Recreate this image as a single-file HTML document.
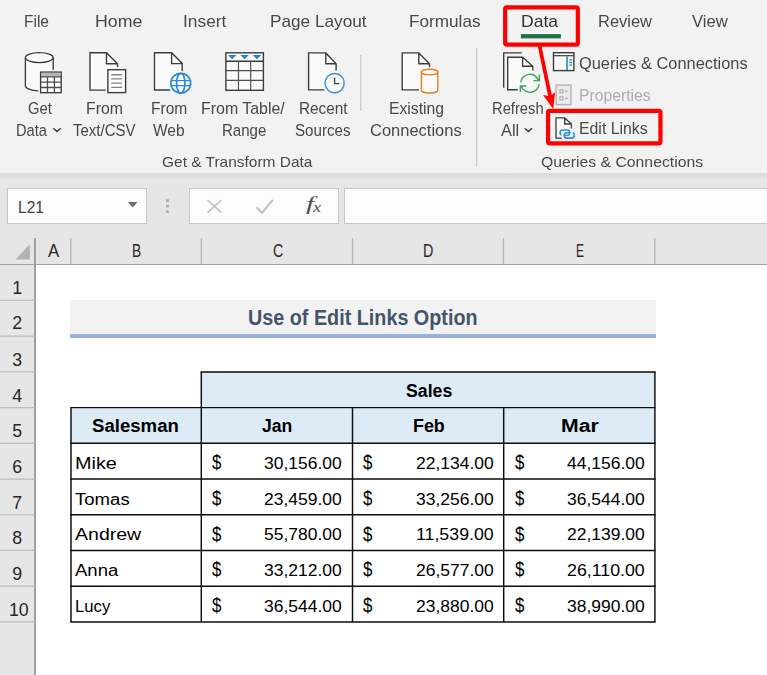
<!DOCTYPE html>
<html lang="en"><head><meta charset="utf-8"><title>Use of Edit Links Option</title>
<style>
html,body{margin:0;padding:0;}
body{width:767px;height:675px;position:relative;overflow:hidden;background:#fff;font-family:"Liberation Sans",sans-serif;}
.t{position:absolute;white-space:pre;line-height:normal;transform-origin:0 0;display:block;}
.a{position:absolute;}
.g{position:absolute;left:0;top:0;width:767px;height:175px;will-change:transform;}
</style></head><body>
<!-- ribbon background -->
<div class="a" style="left:0;top:0;width:767px;height:173px;background:#f2f2f2;"></div>
<div class="a" style="left:0;top:173px;width:767px;height:9px;background:linear-gradient(#d8d8d8 0,#dedede 35%,#e3e3e3 45%,#e6e6e6 100%);"></div>
<div class="a" style="left:0;top:182px;width:767px;height:82.5px;background:#e6e6e6;"></div>
<!-- formula bar boxes -->
<div class="a" style="left:7px;top:188.3px;width:139.6px;height:35.6px;box-sizing:border-box;border:1.4px solid #c6c6c6;background:#fcfcfc;"></div>
<div class="a" style="left:188.6px;top:188.3px;width:150px;height:35.6px;box-sizing:border-box;border:1.4px solid #c6c6c6;background:#fcfcfc;"></div>
<div class="a" style="left:343.6px;top:188.3px;width:440px;height:35.6px;box-sizing:border-box;border:1.4px solid #c6c6c6;background:#fcfcfc;"></div>
<!-- column header bottom line & row header column -->
<div class="a" style="left:0;top:264.05px;width:767px;height:1.3px;background:#a3a3a3;"></div>
<div class="a" style="left:0;top:265.3px;width:35px;height:410px;background:#e6e6e6;"></div>
<div class="a" style="left:34.25px;top:237.5px;width:1.5px;height:438px;background:#a0a0a0;"></div>
<!-- sheet -->
<div class="a" style="left:36px;top:265.3px;width:731px;height:410px;background:#fff;"></div>
<!-- title cell -->
<div class="a" style="left:70px;top:299.6px;width:585.9px;height:34.4px;background:#f2f2f2;"></div>
<div class="a" style="left:70px;top:333.85px;width:585.9px;height:4.2px;background:#9ab0de;"></div>

<svg class="a" style="left:0;top:0" width="767" height="675" viewBox="0 0 767 675" fill="none" stroke-linecap="butt">
<!-- selected tab underline -->
<rect x="520.9" y="34.1" width="40" height="4.3" fill="#217346"/>
<!-- group separators -->
<path d="M360.7 55V111M476.6 48V167" stroke="#c8c8c8" stroke-width="1.2"/>
<!-- Get Data -->
<g stroke="#3b3b3b" stroke-width="1.35">
<path d="M25.4 57.6V85.7A13.9 5.2 0 0 0 53.2 85.7V57.6Z" fill="#fafafa" stroke="none"/>
<ellipse cx="39.3" cy="57.6" rx="13.9" ry="5" fill="#fafafa"/>
<path d="M53.2 57.6V69.8M25.4 57.6V85.7A13.9 5.2 0 0 0 38.3 90.89"/>
<rect x="39.5" y="71" width="22.8" height="22.8" fill="#f6f6f6" stroke="none"/>
<rect x="40.6" y="72.1" width="20.6" height="20.6" fill="#fff"/>
<rect x="41.3" y="72.8" width="19.2" height="3.5" fill="#b5b5b5" stroke="none"/>
<path d="M40.6 76.9H61.2M40.6 82.1H61.2M40.6 87.5H61.2M47.5 76.9V92.7M54.4 76.9V92.7" stroke-width="1.3" stroke="#4a4a4a"/>
</g>
<!-- From Text/CSV -->
<g stroke="#3b3b3b" stroke-width="1.4">
<path d="M90 52.8H106.5L117.5 63.8V90.1H90Z" fill="#fafafa" stroke="none"/>
<path d="M105.8 90.1H90V52.8H106.5L117.5 63.8V67M106.5 52.8V63.8H117.5"/>
<rect x="106.8" y="68.6" width="19.9" height="25.1" fill="#f6f6f6" stroke="none"/>
<rect x="107.9" y="69.7" width="17.7" height="22.9" fill="#fff"/>
<path d="M111.2 74.7H122.1M111.2 78.9H122.1M111.2 83.1H122.1M111.2 87.3H122.1" stroke="#878380" stroke-width="1.35"/>
</g>
<!-- From Web -->
<g stroke="#3b3b3b" stroke-width="1.35">
<path d="M154.5 52.7H171.6L182.2 63V90H154.5Z" fill="#fafafa" stroke="none"/>
<path d="M170.2 90H154.5V52.7H171.6L182.2 63.4V71.2M171.6 52.7V63.6H182.2"/>
<g stroke="#2a8ad8" stroke-width="1.7">
<circle cx="180.75" cy="83.2" r="9.9" fill="#fff"/>
<ellipse cx="180.75" cy="83.2" rx="4.2" ry="9.9"/>
<path d="M171.3 80.6H190.2M171.3 85.6H190.2" stroke-width="1.4"/>
</g>
</g>
<!-- From Table/Range -->
<g stroke="#3b3b3b" stroke-width="1.4">
<rect x="225.9" y="52.8" width="37.5" height="37.5" fill="#fafafa"/>
<path d="M225.9 61.2H263.4" stroke-width="1.5"/>
<path d="M238.5 61.2V90.3M250.7 61.2V90.3M225.9 70.6H263.4M225.9 80.4H263.4" stroke-width="1.15" stroke="#4d4d4d"/>
<path d="M228 55H236.4L232.2 59.3ZM240.4 55H248.9L244.65 59.3ZM252.7 55H261.3L257 59.3Z" fill="#1f84d4" stroke="none"/>
</g>
<!-- Recent Sources -->
<g stroke="#3b3b3b" stroke-width="1.4">
<path d="M308.6 52.9H325.8L336.1 63.7V89.9H308.6Z" fill="#fafafa" stroke="none"/>
<path d="M324.3 89.9H308.6V52.9H325.8L336.1 63.7V70.4M325.8 52.9V63.7H336.1"/>
<circle cx="334.6" cy="83.1" r="9.6" fill="#fcfcfc" stroke="#3391dc" stroke-width="1.4"/>
<path d="M334.6 77.5V83.7H339.3" stroke-width="1.3"/>
</g>
<!-- Existing Connections -->
<g stroke="#3b3b3b" stroke-width="1.4">
<path d="M402.2 52.9H418.8L429.5 63.8V89.9H402.2Z" fill="#fafafa" stroke="none"/>
<path d="M419 89.9H402.2V52.9H418.8L429.5 63.8V67M418.8 52.9V63.8H429.5"/>
<g stroke="#e1801f" stroke-width="1.4">
<path d="M421.4 72.1V90.2A8.2 2.8 0 0 0 437.8 90.2V72.1Z" fill="#fafafa"/>
<ellipse cx="429.6" cy="72.1" rx="8.2" ry="2.8" fill="#fbfbfb"/>
</g>
</g>
<!-- Refresh All -->
<g stroke="#3b3b3b" stroke-width="1.35">
<path d="M521.8 52.9H503.7V87.8"/>
<path d="M507.7 57.2H522.6L532.8 66.2V89.7H507.7Z" fill="#fafafa" stroke="none"/>
<path d="M517.8 89.7H507.7V57.2H522.6L532.8 66.2V70.6M522.6 57.2V66.2H532.8"/>
<g stroke="#37a65b" stroke-width="1.4">
<path d="M520.6 82.6A9.3 9.3 0 0 1 538.6 80.4M539.4 74.6V80.6H533.4"/>
<path d="M539.2 84A9.3 9.3 0 0 1 521.2 86.2M520.4 92V86H526.4"/>
</g>
</g>
<!-- Queries & Connections small icon -->
<g stroke="#3b3b3b" stroke-width="1.4">
<rect x="553.5" y="52.7" width="20.4" height="17.9" fill="#fafafa"/>
<path d="M553.5 55.7H573.9" stroke-width="1.2"/>
<path d="M567 56.3V70" stroke="#2b8fd9" stroke-width="1.7"/>
<path d="M569.1 59.8H572.1M569.1 62.5H572.1M569.1 65.2H572.1" stroke="#2b8fd9" stroke-width="1.3"/>
</g>
<!-- Properties small icon (disabled) -->
<g stroke="#b4b4b4" stroke-width="1.5">
<rect x="556.15" y="85.05" width="14.8" height="19.6" fill="#ebebeb"/>
<rect x="559.9" y="89.8" width="3.1" height="3.1" stroke-width="1.1" stroke="#a8a8a8" fill="#f4f4f4"/>
<rect x="559.9" y="96.8" width="3.1" height="3.1" stroke-width="1.1" stroke="#a8a8a8" fill="#f4f4f4"/>
<path d="M565 91.4H567.7M565 98.4H567.7" stroke-width="1.1" stroke="#a8a8a8"/>
</g>
<!-- Edit Links small icon -->
<g stroke="#3b3b3b" stroke-width="1.3">
<path d="M556 117.9H564.7L571.4 124V138.2H556Z" fill="#fafafa" stroke="none"/>
<path d="M561.8 138.2H556V117.9H564.7L571.4 124V128.6M564.7 117.9V124H571.4"/>
<g stroke="#2b8fd9" stroke-width="1.55">
<rect x="560.1" y="129.9" width="9.6" height="5.5" rx="2.7"/>
<rect x="564.2" y="132.8" width="10.1" height="5.3" rx="2.6"/>
<path d="M561.3 135.4H563.4" stroke="#fafafa" stroke-width="2.3"/>
<path d="M570.5 132.8H572.6" stroke="#f5f5f5" stroke-width="2.3"/>
</g>
</g>
<!-- dropdown chevrons -->
<path d="M53.2 128.2L57 131.4L60.8 128.2M524.7 128.2L528.4 131.4L532.1 128.2" stroke="#444" stroke-width="1.5"/>
<!-- red annotations -->
<g stroke="#ff0000">
<rect x="505.15" y="7.35" width="72.7" height="37.3" rx="1.6" stroke-width="4.2"/>
<rect x="548.05" y="110.8" width="112.4" height="32.6" rx="1.6" stroke-width="4.2"/>
<path d="M539.6 46L550.4 97.5" stroke-width="3.7"/>
<path d="M543.1 95L549.9 96.3L555.1 92.3L553.2 109Z" fill="#ff0000" stroke="none"/>
</g>
<!-- formula bar glyphs -->
<path d="M127.8 202H137.6L132.7 207.6Z" fill="#707070"/>
<path d="M166.1 199.3h2.8v2.6h-2.8zM166.1 204.8h2.8v2.6h-2.8zM166.1 210.4h2.8v2.6h-2.8z" fill="#adadad"/>
<path d="M207.6 200L221.4 212.6M221.4 200L207.6 212.6" stroke="#c2c2c2" stroke-width="1.6"/>
<path d="M256.4 207.2L262 212.8L272.9 199.9" stroke="#c2c2c2" stroke-width="2.1"/>
<!-- select all triangle -->
<path d="M15.3 259.6H29.9V244.2Z" fill="#b3b3b3"/>
<!-- column header separators -->
<path d="M70.8 238V264M201.4 238V264M352.5 238V264M503.5 238V264M654.9 238V264" stroke="#b4b4b4" stroke-width="1.3"/>
<!-- row header separators -->
<path d="M0 300.47H35M0 336.19H35M0 371.90H35M0 407.62H35M0 443.33H35M0 479.04H35M0 514.76H35M0 550.47H35M0 586.19H35M0 621.90H35" stroke="#bcbcbc" stroke-width="1.2"/>
<!-- table -->
<rect x="201.3" y="371.90" width="453.6" height="35.71" fill="#ddebf7"/>
<rect x="71" y="407.62" width="583.9" height="35.71" fill="#ddebf7"/>
<g stroke="#0d0d0d" stroke-width="1.45">
<path d="M200.58 371.90H655.62M70.28 407.62H655.62M70.28 443.33H655.62M70.28 479.04H655.62M70.28 514.76H655.62M70.28 550.47H655.62M70.28 586.19H655.62M70.28 621.90H655.62"/>
<path d="M71 407.62V621.90M201.3 371.90V621.90M352.5 407.62V621.90M503.7 407.62V621.90M654.9 371.90V621.90"/>
</g>
</svg>

<div class="g">
<span class="t" style="left:23.80px;top:12px;font-size:16.2px;color:#484848;transform:scaleX(0.9569);">File</span>
<span class="t" style="left:95.10px;top:12px;font-size:16.2px;color:#484848;transform:scaleX(1.0974);">Home</span>
<span class="t" style="left:183.10px;top:12px;font-size:16.2px;color:#484848;transform:scaleX(1.0732);">Insert</span>
<span class="t" style="left:270.00px;top:12px;font-size:16.2px;color:#484848;transform:scaleX(1.0630);">Page Layout</span>
<span class="t" style="left:408.50px;top:12px;font-size:16.2px;color:#484848;transform:scaleX(1.0598);">Formulas</span>
<span class="t" style="left:521.00px;top:12px;font-size:16.2px;color:#333;transform:scaleX(1.0851);">Data</span>
<span class="t" style="left:598.40px;top:12px;font-size:16.2px;color:#484848;transform:scaleX(1.0173);">Review</span>
<span class="t" style="left:691.80px;top:12px;font-size:16.2px;color:#484848;transform:scaleX(1.0278);">View</span>
<span class="t" style="left:28.30px;top:99px;font-size:16.3px;color:#484848;transform:scaleX(0.9105);">Get</span>
<span class="t" style="left:16.30px;top:121px;font-size:16.3px;color:#484848;transform:scaleX(0.9018);">Data</span>
<span class="t" style="left:85.75px;top:99px;font-size:16.3px;color:#484848;transform:scaleX(0.9703);">From</span>
<span class="t" style="left:72.50px;top:121px;font-size:16.3px;color:#484848;transform:scaleX(0.9225);">Text/CSV</span>
<span class="t" style="left:150.75px;top:99px;font-size:16.3px;color:#484848;transform:scaleX(0.9571);">From</span>
<span class="t" style="left:153.00px;top:121px;font-size:16.3px;color:#484848;transform:scaleX(0.9509);">Web</span>
<span class="t" style="left:201.25px;top:99px;font-size:16.3px;color:#484848;transform:scaleX(0.9781);">From Table/</span>
<span class="t" style="left:222.00px;top:121px;font-size:16.3px;color:#484848;transform:scaleX(0.9243);">Range</span>
<span class="t" style="left:299.00px;top:99px;font-size:16.3px;color:#484848;transform:scaleX(0.9417);">Recent</span>
<span class="t" style="left:294.50px;top:121px;font-size:16.3px;color:#484848;transform:scaleX(0.9308);">Sources</span>
<span class="t" style="left:388.50px;top:99px;font-size:16.3px;color:#484848;transform:scaleX(0.9670);">Existing</span>
<span class="t" style="left:370.00px;top:121px;font-size:16.3px;color:#484848;transform:scaleX(1.0124);">Connections</span>
<span class="t" style="left:491.70px;top:99px;font-size:16.3px;color:#484848;transform:scaleX(0.9055);">Refresh</span>
<span class="t" style="left:500.50px;top:121px;font-size:16.3px;color:#484848;transform:scaleX(1.0056);">All</span>
<span class="t" style="left:161.60px;top:154px;font-size:14.6px;color:#484848;transform:scaleX(1.0599);">Get &amp; Transform Data</span>
<span class="t" style="left:540.80px;top:154px;font-size:14.6px;color:#484848;transform:scaleX(1.0800);">Queries &amp; Connections</span>
<span class="t" style="left:579.00px;top:54px;font-size:16.8px;color:#484848;transform:scaleX(0.9771);">Queries &amp; Connections</span>
<span class="t" style="left:579.20px;top:86px;font-size:16.8px;color:#acacac;transform:scaleX(0.9362);">Properties</span>
<span class="t" style="left:579.00px;top:119px;font-size:16.8px;color:#484848;transform:scaleX(0.9432);">Edit Links</span>
</div>
<span class="t" style="left:17.60px;top:198px;font-size:16.8px;color:#404040;transform:scaleX(0.9250);">L21</span>
<span class="t" style="left:305.60px;top:194px;font-size:18px;color:#4d4d4d;font-family:'Liberation Serif',serif;font-style:italic;transform:scaleX(1.6421);">f</span>
<span class="t" style="left:313.30px;top:199px;font-size:15px;color:#4d4d4d;font-family:'Liberation Serif',serif;font-style:italic;transform:scaleX(1.2073);">x</span>
<span class="t" style="left:48.00px;top:241px;font-size:17.8px;color:#262626;transform:scaleX(0.9432);">A</span>
<span class="t" style="left:132.30px;top:241px;font-size:17.8px;color:#262626;transform:scaleX(0.7747);">B</span>
<span class="t" style="left:272.70px;top:241px;font-size:17.8px;color:#262626;transform:scaleX(0.8000);">C</span>
<span class="t" style="left:423.00px;top:241px;font-size:17.8px;color:#262626;transform:scaleX(0.8078);">D</span>
<span class="t" style="left:575.60px;top:241px;font-size:17.8px;color:#262626;transform:scaleX(0.6737);">E</span>
<span class="t" style="left:12.16px;top:278px;font-size:17.8px;color:#262626;">1</span>
<span class="t" style="left:12.16px;top:313px;font-size:17.8px;color:#262626;">2</span>
<span class="t" style="left:12.16px;top:350px;font-size:17.8px;color:#262626;">3</span>
<span class="t" style="left:12.16px;top:386px;font-size:17.8px;color:#262626;">4</span>
<span class="t" style="left:12.16px;top:421px;font-size:17.8px;color:#262626;">5</span>
<span class="t" style="left:12.16px;top:457px;font-size:17.8px;color:#262626;">6</span>
<span class="t" style="left:12.16px;top:493px;font-size:17.8px;color:#262626;">7</span>
<span class="t" style="left:12.16px;top:528px;font-size:17.8px;color:#262626;">8</span>
<span class="t" style="left:12.16px;top:564px;font-size:17.8px;color:#262626;">9</span>
<span class="t" style="left:8.93px;top:600px;font-size:17.8px;color:#262626;">10</span>
<span class="t" style="left:248.10px;top:305px;font-size:21.6px;color:#44546a;font-weight:bold;transform:scaleX(0.9155);">Use of Edit Links Option</span>
<span class="t" style="left:405.60px;top:380px;font-size:18.3px;color:#000;font-weight:bold;transform:scaleX(0.9675);">Sales</span>
<span class="t" style="left:92.00px;top:415px;font-size:18.3px;color:#000;font-weight:bold;transform:scaleX(1.0176);">Salesman</span>
<span class="t" style="left:262.00px;top:415px;font-size:18.3px;color:#000;font-weight:bold;transform:scaleX(0.9619);">Jan</span>
<span class="t" style="left:413.30px;top:415px;font-size:18.3px;color:#000;font-weight:bold;transform:scaleX(0.9754);">Feb</span>
<span class="t" style="left:561.30px;top:415px;font-size:18.3px;color:#000;font-weight:bold;transform:scaleX(1.1600);">Mar</span>
<span class="t" style="left:74.50px;top:453px;font-size:17.3px;color:#000;transform:scaleX(1.1464);">Mike</span>
<span class="t" style="left:212.20px;top:452px;font-size:19.3px;color:#000;transform:scaleX(0.8744);">$</span>
<span class="t" style="left:264.30px;top:453px;font-size:17.3px;color:#000;transform:scaleX(1.0111);">30,156.00</span>
<span class="t" style="left:363.40px;top:452px;font-size:19.3px;color:#000;transform:scaleX(0.8744);">$</span>
<span class="t" style="left:415.50px;top:453px;font-size:17.3px;color:#000;transform:scaleX(1.0111);">22,134.00</span>
<span class="t" style="left:514.60px;top:452px;font-size:19.3px;color:#000;transform:scaleX(0.8744);">$</span>
<span class="t" style="left:566.70px;top:453px;font-size:17.3px;color:#000;transform:scaleX(1.0111);">44,156.00</span>
<span class="t" style="left:74.50px;top:489px;font-size:17.3px;color:#000;transform:scaleX(1.0739);">Tomas</span>
<span class="t" style="left:212.20px;top:488px;font-size:19.3px;color:#000;transform:scaleX(0.8744);">$</span>
<span class="t" style="left:264.30px;top:489px;font-size:17.3px;color:#000;transform:scaleX(1.0111);">23,459.00</span>
<span class="t" style="left:363.40px;top:488px;font-size:19.3px;color:#000;transform:scaleX(0.8744);">$</span>
<span class="t" style="left:415.50px;top:489px;font-size:17.3px;color:#000;transform:scaleX(1.0111);">33,256.00</span>
<span class="t" style="left:514.60px;top:488px;font-size:19.3px;color:#000;transform:scaleX(0.8744);">$</span>
<span class="t" style="left:566.70px;top:489px;font-size:17.3px;color:#000;transform:scaleX(1.0111);">36,544.00</span>
<span class="t" style="left:74.50px;top:524px;font-size:17.3px;color:#000;transform:scaleX(1.1299);">Andrew</span>
<span class="t" style="left:212.20px;top:524px;font-size:19.3px;color:#000;transform:scaleX(0.8744);">$</span>
<span class="t" style="left:264.30px;top:524px;font-size:17.3px;color:#000;transform:scaleX(1.0111);">55,780.00</span>
<span class="t" style="left:363.40px;top:524px;font-size:19.3px;color:#000;transform:scaleX(0.8744);">$</span>
<span class="t" style="left:415.50px;top:524px;font-size:17.3px;color:#000;transform:scaleX(1.0278);">11,539.00</span>
<span class="t" style="left:514.60px;top:524px;font-size:19.3px;color:#000;transform:scaleX(0.8744);">$</span>
<span class="t" style="left:566.70px;top:524px;font-size:17.3px;color:#000;transform:scaleX(1.0111);">22,139.00</span>
<span class="t" style="left:74.50px;top:560px;font-size:17.3px;color:#000;transform:scaleX(1.0724);">Anna</span>
<span class="t" style="left:212.20px;top:559px;font-size:19.3px;color:#000;transform:scaleX(0.8744);">$</span>
<span class="t" style="left:264.30px;top:560px;font-size:17.3px;color:#000;transform:scaleX(1.0111);">33,212.00</span>
<span class="t" style="left:363.40px;top:559px;font-size:19.3px;color:#000;transform:scaleX(0.8744);">$</span>
<span class="t" style="left:415.50px;top:560px;font-size:17.3px;color:#000;transform:scaleX(1.0111);">26,577.00</span>
<span class="t" style="left:514.60px;top:559px;font-size:19.3px;color:#000;transform:scaleX(0.8744);">$</span>
<span class="t" style="left:566.70px;top:560px;font-size:17.3px;color:#000;transform:scaleX(1.0278);">26,110.00</span>
<span class="t" style="left:75.00px;top:596px;font-size:17.3px;color:#000;transform:scaleX(0.9671);">Lucy</span>
<span class="t" style="left:212.20px;top:595px;font-size:19.3px;color:#000;transform:scaleX(0.8744);">$</span>
<span class="t" style="left:264.30px;top:596px;font-size:17.3px;color:#000;transform:scaleX(1.0111);">36,544.00</span>
<span class="t" style="left:363.40px;top:595px;font-size:19.3px;color:#000;transform:scaleX(0.8744);">$</span>
<span class="t" style="left:415.50px;top:596px;font-size:17.3px;color:#000;transform:scaleX(1.0111);">23,880.00</span>
<span class="t" style="left:514.60px;top:595px;font-size:19.3px;color:#000;transform:scaleX(0.8744);">$</span>
<span class="t" style="left:566.70px;top:596px;font-size:17.3px;color:#000;transform:scaleX(1.0111);">38,990.00</span>
</body></html>
